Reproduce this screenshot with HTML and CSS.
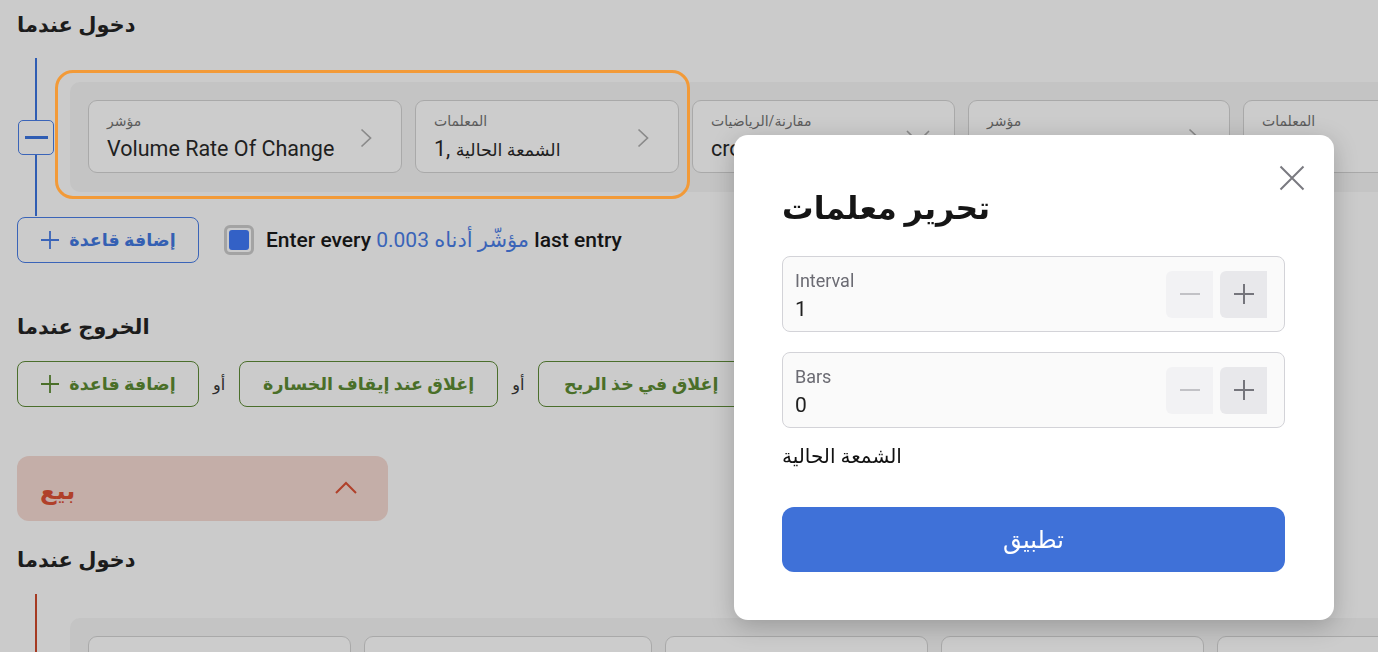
FILE: index.html
```html
<!DOCTYPE html>
<html lang="ar">
<head>
<meta charset="utf-8">
<title>Strategy rules</title>
<link rel="stylesheet" href="styles.css">
</head>
<body>
<main class="page">
  <section class="block block--entry">
    <h2 class="heading">دخول عندما</h2>
    <div class="rules">
      <div class="rail rail--blue">
        <button class="collapse" type="button"><span class="collapse__bar"></span></button>
      </div>
      <div class="rule-row">
        <div class="card card--w314">
          <div class="card__text"><span class="card__label">مؤشر</span><span class="card__value">Volume Rate Of Change</span></div>
          <svg class="chev-right" width="12" height="20" viewBox="0 0 12 20"><path d="M1.5 1.5l9 8.5-9 8.5" /></svg>
        </div>
        <div class="card card--w264">
          <div class="card__text"><span class="card__label">المعلمات</span><span class="card__value">1, <span class="ar">الشمعة الحالية</span></span></div>
          <svg class="chev-right" width="12" height="20" viewBox="0 0 12 20"><path d="M1.5 1.5l9 8.5-9 8.5" /></svg>
        </div>
        <div class="card card--w263 card--tight">
          <div class="card__text"><span class="card__label">مقارنة/الرياضيات</span><span class="card__value">crosses</span></div>
          <svg class="chev-down" width="24" height="13" viewBox="0 0 24 13"><path d="M1 1l11 11 11-11" /></svg>
        </div>
        <div class="card card--w262">
          <div class="card__text"><span class="card__label">مؤشر</span><span class="card__value">Number</span></div>
          <svg class="chev-right" width="12" height="20" viewBox="0 0 12 20"><path d="M1.5 1.5l9 8.5-9 8.5" /></svg>
        </div>
        <div class="card card--w262">
          <div class="card__text"><span class="card__label">المعلمات</span><span class="card__value">0.003</span></div>
          <svg class="chev-right" width="12" height="20" viewBox="0 0 12 20"><path d="M1.5 1.5l9 8.5-9 8.5" /></svg>
        </div>
      </div>
      <div class="highlight"></div>
    </div>
    <div class="actions">
      <button class="add-btn add-btn--blue add-btn--w182" type="button">
        <svg class="plus" width="20" height="20" viewBox="0 0 20 20"><path d="M10 1v18M1 10h18" /></svg>
        <span>إضافة قاعدة</span>
      </button>
      <label class="check">
        <span class="check__box"><span class="check__fill"></span></span>
        <span class="check__text">Enter every <span class="check__hl">0.003 مؤشّر أدناه</span> last entry</span>
      </label>
    </div>
  </section>

  <section class="block block--exit">
    <h2 class="heading">الخروج عندما</h2>
    <div class="exit-row">
      <button class="add-btn add-btn--green add-btn--w182" type="button">
        <svg class="plus" width="20" height="20" viewBox="0 0 20 20"><path d="M10 1v18M1 10h18" /></svg>
        <span>إضافة قاعدة</span>
      </button>
      <span class="or">أو</span>
      <button class="add-btn add-btn--green add-btn--w259" type="button">إغلاق عند إيقاف الخسارة</button>
      <span class="or">أو</span>
      <button class="add-btn add-btn--green add-btn--w206" type="button">إغلاق في خذ الربح</button>
    </div>
  </section>

  <div class="sell">
    <span class="sell__title">بيع</span>
    <svg class="chev-up" width="22" height="13" viewBox="0 0 22 13"><path d="M1 12L11 2l10 10" /></svg>
  </div>

  <section class="block block--sell-entry">
    <h2 class="heading">دخول عندما</h2>
    <div class="rules rules--bottom">
      <div class="rail rail--red"></div>
      <div class="rule-row rule-row--bottom">
        <div class="card card--w263"></div>
        <div class="card card--w288"></div>
        <div class="card card--w263"></div>
        <div class="card card--w263"></div>
        <div class="card card--w262"></div>
      </div>
    </div>
  </section>
</main>

<div class="modal" role="dialog">
  <button class="modal__close" type="button" aria-label="close">
    <svg width="26" height="26" viewBox="0 0 26 26"><path d="M1.5 1.5l23 23M24.5 1.5l-23 23" /></svg>
  </button>
  <h3 class="modal__title">تحرير معلمات</h3>
  <div class="field">
    <div class="field__text"><span class="field__label">Interval</span><span class="field__value">1</span></div>
    <div class="stepper">
      <span class="step step--minus"><svg width="22" height="22" viewBox="0 0 22 22"><path d="M1 11h20" /></svg></span>
      <span class="step step--plus"><svg width="22" height="22" viewBox="0 0 22 22"><path d="M11 1v20M1 11h20" /></svg></span>
    </div>
  </div>
  <div class="field">
    <div class="field__text"><span class="field__label">Bars</span><span class="field__value">0</span></div>
    <div class="stepper">
      <span class="step step--minus"><svg width="22" height="22" viewBox="0 0 22 22"><path d="M1 11h20" /></svg></span>
      <span class="step step--plus"><svg width="22" height="22" viewBox="0 0 22 22"><path d="M11 1v20M1 11h20" /></svg></span>
    </div>
  </div>
  <p class="modal__note">الشمعة الحالية</p>
  <button class="apply" type="button">تطبيق</button>
</div>
</body>
</html>
```

FILE: styles.css
```css
* { box-sizing: border-box; }

html, body {
  margin: 0;
  padding: 0;
  width: 1378px;
  height: 652px;
  overflow: hidden;
  background: #cbcbcb;
  font-family: Roboto, "Noto Sans", "DejaVu Sans", sans-serif;
  color: #1b1b1b;
}

.page {
  padding: 11px 0 0 17px;
}

.heading {
  margin: 0;
  font-size: 21px;
  line-height: 28px;
  font-weight: 700;
  color: #1c1c1c;
}

/* rules */
.rules {
  position: relative;
  display: flex;
  height: 158px;
  margin-top: 19px;
}

.rail {
  width: 38px;
  flex: 0 0 38px;
  display: flex;
  flex-direction: column;
  align-items: center;
  justify-content: center;
  position: relative;
}
.rail::before {
  content: "";
  position: absolute;
  left: 18px;
  top: 0;
  bottom: 0;
  width: 2px;
}
.rail--blue::before { background: #2f5db3; }
.rail--red::before { background: #a53a22; }

.collapse {
  position: relative;
  z-index: 1;
  width: 36px;
  height: 35px;
  padding: 0;
  border: 1px solid #3a64b8;
  border-radius: 5px;
  background: #cbcbcb;
  display: flex;
  align-items: center;
  justify-content: center;
}
.collapse__bar {
  width: 23px;
  height: 3px;
  background: #2f5db3;
}

.rule-row {
  flex: 1;
  margin: 24px 0 0 15px;
  height: 110px;
  padding: 18px;
  background: #c4c4c4;
  border-radius: 10px 0 0 10px;
  display: flex;
  gap: 13px;
  overflow: hidden;
}

.card {
  flex: 0 0 auto;
  height: 73px;
  border: 1px solid #a9a9a9;
  border-radius: 9px;
  background: #cccccc;
  padding: 11px 29px 0 18px;
  display: flex;
  justify-content: space-between;
  align-items: flex-start;
}
.card--tight { padding-right: 24px; }
.card--w314 { width: 314px; }
.card--w264 { width: 264px; }
.card--w263 { width: 263px; }
.card--w262 { width: 262px; }
.card--w288 { width: 288px; }

.card__text {
  display: flex;
  flex-direction: column;
}
.card__label {
  font-size: 14px;
  line-height: 18px;
  color: #5b5b5b;
}
.card__value {
  margin-top: 6px;
  font-size: 21.5px;
  line-height: 26px;
  color: #1f1f1f;
  white-space: nowrap;
}
.card__value .ar {
  font-size: 17.5px;
}

.chev-right {
  margin-top: 16px;
  fill: none;
  stroke: #8a8a8a;
  stroke-width: 1.7;
}
.chev-down {
  margin-top: 18px;
  fill: none;
  stroke: #8a8a8a;
  stroke-width: 1.7;
}

.highlight {
  position: absolute;
  left: 38px;
  top: 12px;
  width: 635px;
  height: 129px;
  border: 3px solid #f29a38;
  border-radius: 18px;
  pointer-events: none;
}

/* actions */
.actions {
  display: flex;
  align-items: center;
  height: 47px;
  padding-top: 1px;
}

.add-btn {
  height: 46px;
  border: 1px solid;
  border-radius: 8px;
  background: transparent;
  font-family: inherit;
  font-size: 17.5px;
  font-weight: 700;
  display: flex;
  align-items: center;
  justify-content: center;
  gap: 9px;
  padding: 0;
}
.add-btn--w182 { width: 182px; }
.add-btn--w259 { width: 259px; }
.add-btn--w206 { width: 206px; }
.add-btn--blue { border-color: #3a64b8; color: #3560b3; }
.add-btn--green { border-color: #4b6f2c; color: #4a6f29; }
.plus {
  fill: none;
  stroke: currentColor;
  stroke-width: 1.8;
}
.add-btn--blue .plus { stroke: #3a64b8; }

.check {
  display: flex;
  align-items: center;
  margin-left: 25px;
}
.check__box {
  width: 30px;
  height: 30px;
  border: 3px solid #a3a3a3;
  border-radius: 6px;
  padding: 2px;
  display: flex;
}
.check__fill {
  flex: 1;
  background: #3361c6;
  border-radius: 3px;
}
.check__text {
  margin-left: 12px;
  font-size: 21px;
  font-weight: 500;
  color: #141414;
  white-space: nowrap;
}
.check__hl {
  color: #3a64b8;
  font-weight: 400;
}

/* exit */
.block--exit {
  margin-top: 50px;
}
.exit-row {
  display: flex;
  align-items: center;
  gap: 14px;
  margin-top: 20px;
}
.or {
  font-size: 16px;
  color: #2a2a2a;
}

/* sell */
.sell {
  margin-top: 49px;
  width: 371px;
  height: 65px;
  border-radius: 12px;
  background: #c4aea8;
  display: flex;
  align-items: center;
  justify-content: space-between;
  padding: 4px 31px 0 23px;
}
.sell__title {
  font-size: 24px;
  font-weight: 700;
  color: #b0402a;
}
.chev-up {
  fill: none;
  stroke: #b0402a;
  stroke-width: 2;
  margin-top: -6px;
}

.block--sell-entry {
  margin-top: 25px;
}
.rules--bottom {
  margin-top: 20px;
}

/* modal */
.modal {
  position: fixed;
  left: 734px;
  top: 135px;
  width: 600px;
  height: 485px;
  background: #ffffff;
  border-radius: 14px;
  box-shadow: 0 6px 24px rgba(0, 0, 0, 0.22);
  padding: 54px 49px 0 48px;
}
.modal__close {
  position: absolute;
  top: 30px;
  right: 29px;
  border: 0;
  background: transparent;
  padding: 0;
  width: 26px;
  height: 26px;
}
.modal__close svg {
  display: block;
  fill: none;
  stroke: #7a7a80;
  stroke-width: 2;
}
.modal__title {
  margin: 0;
  font-size: 31.5px;
  line-height: 40px;
  font-weight: 700;
  color: #151515;
}

.field {
  margin-top: 20px;
  height: 76px;
  border: 1px solid #d3d3d8;
  border-radius: 8px;
  background: #fafafa;
  display: flex;
  align-items: center;
  justify-content: space-between;
  padding: 0 17px 0 12px;
}
.modal__title + .field { margin-top: 27px; }
.field__text {
  display: flex;
  flex-direction: column;
  align-self: flex-start;
  padding-top: 14px;
}
.field__label {
  font-size: 18px;
  line-height: 20px;
  color: #6b6b73;
}
.field__value {
  margin-top: 6px;
  font-size: 21px;
  line-height: 24px;
  color: #202020;
}
.stepper {
  display: flex;
  gap: 7px;
}
.step {
  width: 47px;
  height: 47px;
  border-radius: 6px 0 0 6px;
  display: flex;
  align-items: center;
  justify-content: center;
}
.step svg {
  fill: none;
  stroke-width: 2;
}
.step--minus { background: #f2f2f4; }
.step--minus svg { stroke: #c2c2c6; }
.step--plus { background: #e8e8eb; }
.step--plus svg { stroke: #75757c; }

.modal__note {
  margin: 16px 0 0;
  font-size: 20px;
  line-height: 24px;
  color: #111;
}

.apply {
  margin-top: 39px;
  width: 503px;
  height: 65px;
  border: 0;
  border-radius: 12px;
  background: #3f71d8;
  color: #ffffff;
  font-family: inherit;
  font-size: 24px;
  font-weight: 400;
}
```
